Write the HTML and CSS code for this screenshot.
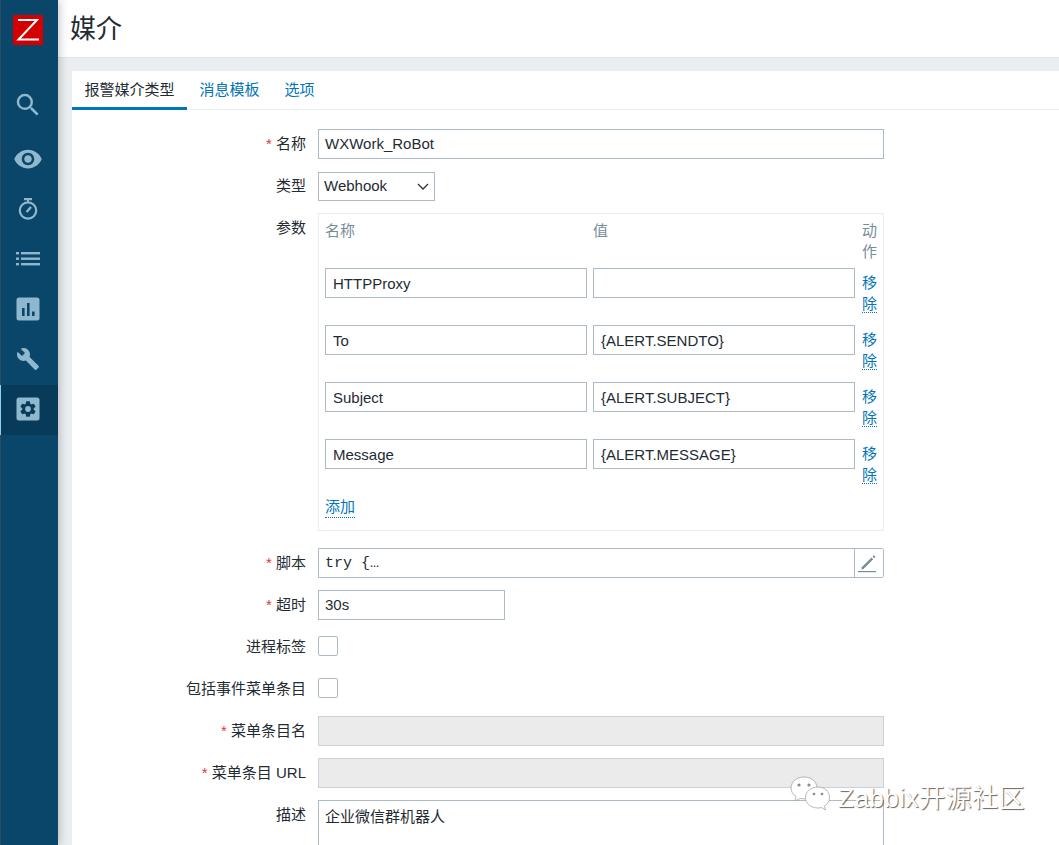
FILE: index.html
```html
<!DOCTYPE html>
<html lang="en">
<head>
    <meta charset="UTF-8">
    <meta name="viewport" content="width=device-width, initial-scale=1.0">
    <title>媒介</title>
    <link rel="stylesheet" href="styles.css">
</head>
<body>
    <div class="app">
        <nav class="sidebar">
            <div class="logo">
                <svg width="30" height="30" viewBox="0 0 30 30">
                    <rect width="30" height="30" fill="#d40000"/>
                    <polyline points="5,5 24,5 5.500,24.500 26,24.500" fill="none" stroke="#fff" stroke-width="2"/>
                </svg>
            </div>
            <a class="nav-item nav-search">
                <svg width="30" height="30" viewBox="0 0 24 24"><path d="M15.5 14h-.79l-.28-.27A6.47 6.47 0 0 0 16 9.5 6.5 6.5 0 1 0 9.5 16c1.61 0 3.09-.59 4.23-1.57l.27.28v.79l5 4.99L20.49 19l-4.99-5zm-6 0C7.01 14 5 11.99 5 9.5S7.01 5 9.5 5 14 7.01 14 9.5 11.99 14 9.5 14z"/></svg>
            </a>
            <a class="nav-item">
                <svg width="30" height="30" viewBox="0 0 24 24"><path d="M12 4.5C7 4.5 2.73 7.61 1 12c1.73 4.39 6 7.5 11 7.5s9.27-3.11 11-7.5c-1.73-4.39-6-7.5-11-7.5zM12 17c-2.76 0-5-2.24-5-5s2.24-5 5-5 5 2.24 5 5-2.24 5-5 5zm0-8c-1.66 0-3 1.34-3 3s1.34 3 3 3 3-1.34 3-3-1.34-3-3-3z"/></svg>
            </a>
            <a class="nav-item">
                <svg width="30" height="30" viewBox="0 0 30 30">
                    <circle cx="15" cy="16.500" r="8.200" fill="none" stroke="#8fb8ce" stroke-width="2.200"/>
                    <rect x="11" y="4" width="8" height="2.200"/>
                    <rect x="14" y="5" width="2" height="4"/>
                    <line x1="13.600" y1="18" x2="18" y2="13" stroke="#8fb8ce" stroke-width="2.400"/>
                </svg>
            </a>
            <a class="nav-item">
                <svg width="30" height="30" viewBox="0 0 30 30">
                    <rect x="3" y="8" width="3" height="2.400"/><rect x="8" y="8" width="19" height="2.400"/>
                    <rect x="3" y="13.500" width="3" height="2.400"/><rect x="8" y="13.500" width="19" height="2.400"/>
                    <rect x="3" y="19" width="3" height="2.400"/><rect x="8" y="19" width="19" height="2.400"/>
                </svg>
            </a>
            <a class="nav-item">
                <svg width="30" height="30" viewBox="0 0 30 30">
                    <rect x="3.500" y="3.500" width="23" height="23" rx="2.500"/>
                    <rect class="cut" x="9" y="14" width="2.600" height="8"/>
                    <rect class="cut" x="14" y="9" width="2.600" height="13"/>
                    <rect class="cut" x="19" y="17.500" width="2.600" height="4.500"/>
                </svg>
            </a>
            <a class="nav-item">
                <svg width="30" height="30" viewBox="-3 -3 30 30"><path d="M22.7 19l-9.1-9.1c.9-2.3.4-5-1.5-6.9-2-2-5-2.4-7.4-1.3L9 6 6 9 1.6 4.7C.4 7.1.9 10.1 2.9 12.1c1.9 1.9 4.6 2.4 6.9 1.5l9.1 9.1c.4.4 1 .4 1.4 0l2.3-2.3c.5-.4.5-1.1.1-1.4z"/></svg>
            </a>
            <a class="nav-item active">
                <svg width="30" height="30" viewBox="0 0 30 30">
                    <rect x="3.500" y="3.500" width="23" height="23" rx="2.500"/>
                    <path class="cut" transform="translate(5.400 5.400) scale(0.8)" d="M19.14 12.94c.04-.3.06-.61.06-.94s-.02-.64-.07-.94l2.03-1.58a.49.49 0 0 0 .12-.61l-1.92-3.32a.49.49 0 0 0-.59-.22l-2.39.96c-.5-.38-1.03-.7-1.62-.94l-.36-2.54a.48.48 0 0 0-.48-.41h-3.84c-.24 0-.43.17-.47.41l-.36 2.54c-.59.24-1.13.57-1.62.94l-2.39-.96a.48.48 0 0 0-.59.22L2.74 8.87c-.12.21-.08.47.12.61l2.03 1.58c-.05.3-.09.63-.09.94s.02.64.07.94l-2.03 1.58a.49.49 0 0 0-.12.61l1.92 3.32c.12.22.37.29.59.22l2.39-.96c.5.38 1.03.7 1.62.94l.36 2.54c.05.24.24.41.48.41h3.84c.24 0 .44-.17.47-.41l.36-2.54c.59-.24 1.13-.56 1.62-.94l2.39.96c.22.08.47 0 .59-.22l1.92-3.32c.12-.22.07-.47-.12-.61l-2.01-1.58zM12 15.6A3.6 3.6 0 1 1 12 8.4a3.6 3.6 0 0 1 0 7.2z"/>
                </svg>
            </a>
        </nav>

        <main class="main">
            <header class="page-header">
                <h1>媒介</h1>
            </header>
            <div class="content">
                <div class="card">
                    <ul class="tabs">
                        <li class="tab active">报警媒介类型</li>
                        <li class="tab">消息模板</li>
                        <li class="tab">选项</li>
                    </ul>
                    <form class="form">
                        <label class="form-label"><span class="req">*</span> 名称</label>
                        <input class="field" type="text" value="WXWork_RoBot">

                        <label class="form-label">类型</label>
                        <select class="field-select"><option>Webhook</option></select>

                        <label class="form-label">参数</label>
                        <div class="params-cell">
                            <div class="params">
                                <div class="param-head">名称</div>
                                <div class="param-head">值</div>
                                <div class="param-head param-action">动作</div>

                                <input class="param-input" type="text" value="HTTPProxy">
                                <input class="param-input" type="text" value="">
                                <a class="remove">移除</a>

                                <input class="param-input" type="text" value="To">
                                <input class="param-input" type="text" value="{ALERT.SENDTO}">
                                <a class="remove">移除</a>

                                <input class="param-input" type="text" value="Subject">
                                <input class="param-input" type="text" value="{ALERT.SUBJECT}">
                                <a class="remove">移除</a>

                                <input class="param-input" type="text" value="Message">
                                <input class="param-input" type="text" value="{ALERT.MESSAGE}">
                                <a class="remove">移除</a>
                            </div>
                            <div class="params-foot"><a class="add-link">添加</a></div>
                        </div>

                        <label class="form-label"><span class="req">*</span> 脚本</label>
                        <div class="script-field">
                            <span class="script-text">try {…</span>
                            <button class="edit-btn" type="button">
                                <svg width="20" height="20" viewBox="0 0 20 20">
                                    <path d="M3.500 14.500 13.500 4.500l1.700 1.700-10 10H3.500z"/>
                                    <path d="M14.500 3.500l1.300-1.300 1.700 1.700-1.300 1.300z"/>
                                    <rect x="0" y="18" width="18" height="1.200"/>
                                </svg>
                            </button>
                        </div>

                        <label class="form-label"><span class="req">*</span> 超时</label>
                        <input class="field field-short" type="text" value="30s">

                        <label class="form-label">进程标签</label>
                        <div class="check-cell"><span class="checkbox"></span></div>

                        <label class="form-label">包括事件菜单条目</label>
                        <div class="check-cell"><span class="checkbox"></span></div>

                        <label class="form-label"><span class="req">*</span> 菜单条目名</label>
                        <input class="field field-disabled" type="text" disabled>

                        <label class="form-label"><span class="req">*</span> 菜单条目 URL</label>
                        <input class="field field-disabled" type="text" disabled>

                        <label class="form-label label-desc">描述</label>
                        <textarea class="field-area">企业微信群机器人</textarea>
                    </form>
                </div>
            </div>
        </main>
    </div>

    <div class="watermark">
        <svg width="44" height="38" viewBox="0 0 44 38">
            <path class="bubble" d="M15 1C7.500 1 2 6 2 12c0 3.600 2 6.600 5 8.600L6 25l5-2.600c1.300.3 2.600.5 4 .5 7.500 0 13-5 13-11S22.500 1 15 1z"/>
            <circle class="dot" cx="10" cy="9" r="1.600"/><circle class="dot" cx="20" cy="9" r="1.600"/>
            <path class="bubble" d="M29 11c-7 0-12.500 4.600-12.500 10.500S22 32 29 32c1.200 0 2.400-.2 3.500-.5l4 2.500-1-3.800c3-2 5-5 5-8.700C40.500 15.600 36 11 29 11z"/>
            <circle class="dot" cx="25" cy="18" r="1.300"/><circle class="dot" cx="33" cy="18" r="1.300"/>
        </svg>
        <span class="watermark-text">Zabbix开源社区</span>
    </div>
</body>
</html>
```

FILE: styles.css
```css
* {
    box-sizing: border-box;
}

html, body {
    height: 845px;
    margin: 0;
    overflow: hidden;
}

body {
    font-family: "Liberation Sans", "Noto Sans CJK SC", sans-serif;
    font-size: 15px;
    color: #1f2c33;
    background-color: #ebeef0;
}

.app {
    display: flex;
    height: 845px;
}

.sidebar {
    position: relative;
    z-index: 2;
    flex: 0 0 58px;
    background-color: #0a466a;
    box-shadow: 0 0 10px rgba(0,0,0,0.3), inset 1px 0 0 #2b4d62;
}

.logo {
    height: 80px;
    padding: 15px 0 0 13px;
}

.logo svg {
    display: block;
}

.nav-item {
    display: flex;
    align-items: center;
    justify-content: center;
    height: 50px;
    padding-right: 3px;
}

.nav-search {
    margin-bottom: 4px;
}

.nav-item svg {
    fill: #8fb8ce;
}

.nav-item .cut {
    fill: #0a466a;
}

.nav-item.active {
    margin-top: 1px;
    background-color: #083b5a;
    box-shadow: inset 1px 0 0 #8fd0f0;
}

.nav-item.active svg {
    margin-top: -2px;
}

.nav-item.active .cut {
    fill: #083b5a;
}

.main {
    flex: 1;
    min-width: 0;
}

.page-header {
    height: 58px;
    padding-left: 12px;
    background: white;
    border-bottom: 1px solid #dfe4e7;
}

h1 {
    margin: 0;
    font-size: 26px;
    font-weight: normal;
    line-height: 59px;
}

.content {
    padding: 13px 0 0 14px;
}

.card {
    background: white;
    height: 774px;
}

.tabs {
    display: flex;
    height: 39px;
    margin: 0;
    padding: 0;
    list-style: none;
    border-bottom: 1px solid #ebeef0;
}

.tab {
    height: 39px;
    padding: 0 12.5px;
    line-height: 38px;
    color: #0275b8;
}

.tab.active {
    color: #1f2c33;
    border-bottom: 3px solid #0275b8;
}

.form {
    display: grid;
    grid-template-columns: 234px 566px;
    column-gap: 12px;
    row-gap: 12px;
    padding-top: 19px;
}

.form-label {
    line-height: 29px;
    text-align: right;
}

.label-desc {
    line-height: 30px;
}

.req {
    color: #e33734;
}

.field,
.field-area,
.param-input {
    height: 30px;
    padding: 0 6px 2px;
    font: inherit;
    color: inherit;
    background: white;
    border: 1px solid #acbbc4;
    border-radius: 0;
    outline: none;
}

.field-short {
    width: 187px;
}

.field-select {
    width: 117px;
    height: 29px;
    margin-top: 1px;
    padding: 0 5px 2px;
    font: inherit;
    color: inherit;
    background: white url("data:image/svg+xml,%3Csvg xmlns='http://www.w3.org/2000/svg' width='12' height='8'%3E%3Cpath d='M1 1l5 5 5-5' fill='none' stroke='%23333' stroke-width='1.300'/%3E%3C/svg%3E") no-repeat right 5px center;
    border: 1px solid #acbbc4;
    border-radius: 0;
    appearance: none;
}

.field-disabled {
    background-color: #ebebeb;
    border-color: #c8d2d8;
}

.field-area {
    height: 45px;
    padding-top: 4px;
    border-bottom: 0;
    resize: none;
    overflow: hidden;
}

.params-cell {
    padding-bottom: 5px;
}

.params {
    display: grid;
    grid-template-columns: 262px 262px 16px;
    column-gap: 6px;
    row-gap: 12px;
    padding: 6px 5px 0 6px;
    border: 1px solid #ebeef0;
    border-bottom: 0;
}

.param-head {
    color: #768d99;
    line-height: 21px;
    margin-bottom: -6px;
}

.param-action {
    width: 15px;
    margin-left: 1px;
}

.param-input {
    padding: 0 7px;
    width: 262px;
}

.remove {
    display: block;
    width: 15px;
    height: 45px;
    margin-left: 1px;
    padding-top: 5px;
    line-height: 20.5px;
    color: #0275b8;
    border-bottom: 1px dotted #0275b8;
}

.params-foot {
    height: 47px;
    padding: 12px 0 0 6px;
    border: 1px solid #ebeef0;
    border-top: 0;
}

.add-link {
    display: inline-block;
    line-height: 21px;
    color: #0275b8;
    border-bottom: 1px dotted #0275b8;
}

.script-field {
    display: flex;
    height: 30px;
    border: 1px solid #acbbc4;
    border-radius: 0 2px 2px 0;
}

.script-text {
    flex: 1;
    padding-left: 6px;
    font-family: "Liberation Mono", monospace;
    line-height: 29px;
}

.edit-btn {
    width: 29px;
    padding: 0;
    background: white;
    border: 0;
    border-left: 1px solid #acbbc4;
}

.edit-btn svg {
    display: block;
    margin: 0 0 0 3px;
    fill: #768d99;
}

.check-cell {
    height: 30px;
    padding-top: 4px;
}

.checkbox {
    display: block;
    width: 20px;
    height: 20px;
    border: 1px solid #acbbc4;
    border-radius: 2px;
}

.watermark {
    position: absolute;
    left: 789px;
    top: 776px;
    display: flex;
    align-items: center;
    gap: 5px;
}

.bubble {
    fill: white;
    stroke: #9a9a9a;
    stroke-width: 0.7;
}

.dot {
    fill: #8a8a8a;
}

.watermark-text {
    font-size: 26px;
    letter-spacing: 0.5px;
    color: #fff;
    text-shadow: 1px 1px 1px rgba(0,0,0,0.6);
}
```
